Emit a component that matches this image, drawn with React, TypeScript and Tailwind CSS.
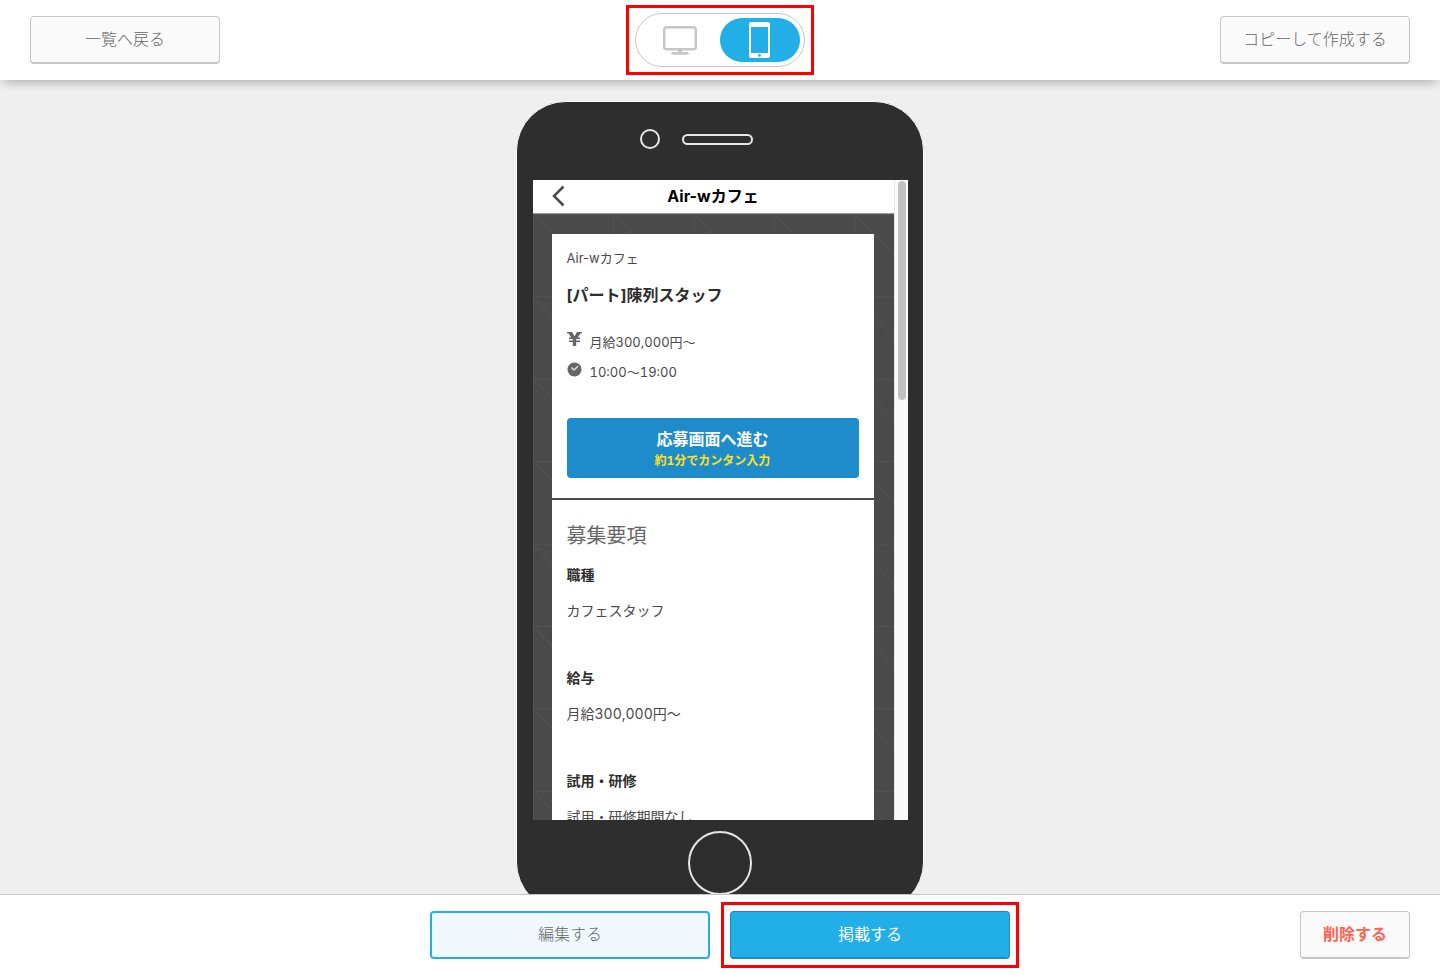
import { useState } from "react";
import clsx from "clsx";

type Device = "pc" | "phone";

const requirements = [
  { label: "職種", value: "カフェスタッフ" },
  { label: "給与", value: "月給300,000円〜" },
  { label: "試用・研修", value: "試用・研修期間なし" },
];

export default function App() {
  const [device, setDevice] = useState<Device>("phone");

  return (
    <div className="flex h-screen flex-col overflow-hidden bg-[#efefef] font-['Noto_Sans_CJK_JP',sans-serif] text-base text-[#666]">
      <header className="relative z-10 grid h-20 shrink-0 grid-cols-[1fr_auto_1fr] items-center bg-white px-[30px] shadow-[0_6px_10px_-4px_rgba(0,0,0,0.3)]">
        <PlainButton className="w-[190px] font-light">一覧へ戻る</PlainButton>
        <DeviceToggle device={device} onChange={setDevice} />
        <PlainButton className="w-[190px] justify-self-end font-light">
          コピーして作成する
        </PlainButton>
      </header>

      <main className="flex min-h-0 flex-1 items-start justify-center overflow-hidden pt-[21px]">
        <PhoneFrame />
      </main>

      <footer className="z-10 grid shrink-0 grid-cols-[1fr_auto_1fr] items-center border-t border-[#c6c6c6] bg-white px-[30px] py-4">
        <div />
        <div className="flex gap-5">
          <button className="h-12 w-[280px] rounded border-2 border-[#22aee6] bg-[#f1f9ff] pb-1 font-light">
            編集する
          </button>
          <div className="outline-[3px] outline-offset-[6px] outline-[#f00] outline-solid">
            <button className="h-12 w-[280px] rounded border border-b-2 border-[#1c8bb8] bg-[#22aee6] pb-1 text-white">
              掲載する
            </button>
          </div>
        </div>
        <PlainButton className="w-[110px] justify-self-end font-bold text-[#ff6252]">
          削除する
        </PlainButton>
      </footer>
    </div>
  );
}

// ---- Sub-components ----

function PlainButton({
  className,
  children,
}: {
  className?: string;
  children: React.ReactNode;
}) {
  return (
    <button
      className={clsx(
        "h-12 rounded border border-b-2 border-[#c6c6c6] bg-[#fafafa] pb-1",
        className
      )}
    >
      {children}
    </button>
  );
}

function DeviceToggle({
  device,
  onChange,
}: {
  device: Device;
  onChange: (device: Device) => void;
}) {
  const buttonClass = (active: boolean) =>
    clsx(
      "flex h-11 w-20 items-center justify-center rounded-full",
      active ? "bg-[#22aee6] text-white" : "text-[#c6c6c6]"
    );

  return (
    <div className="border-[3px] border-[#f00] px-[6px] py-[5px]">
      <div className="flex rounded-full border border-[#c6c6c6] bg-white p-1">
        <button
          aria-label="PC"
          aria-pressed={device === "pc"}
          onClick={() => onChange("pc")}
          className={buttonClass(device === "pc")}
        >
          <svg width="34" height="30" viewBox="0 0 34 30" fill="none">
            <rect x="1.25" y="2.25" width="31.5" height="22" rx="2.5" stroke="currentColor" strokeWidth="2.5" />
            <path d="M15 25h4v2h5.500a1.400 1.400 0 0 1 0 2.800h-15a1.400 1.400 0 0 1 0-2.800H15z" fill="currentColor" />
          </svg>
        </button>
        <button
          aria-label="スマートフォン"
          aria-pressed={device === "phone"}
          onClick={() => onChange("phone")}
          className={buttonClass(device === "phone")}
        >
          <svg width="22" height="36" viewBox="0 0 22 36">
            <path
              fillRule="evenodd"
              fill="currentColor"
              d="M2 0h17a2 2 0 0 1 2 2v32a2 2 0 0 1-2 2H2a2 2 0 0 1-2-2V2a2 2 0 0 1 2-2zM2 5v26h17V5zM10.500 32a1.400 1.400 0 1 0 0 2.800a1.400 1.400 0 0 0 0-2.800z"
            />
          </svg>
        </button>
      </div>
    </div>
  );
}

function PhoneFrame() {
  return (
    <div className="flex h-[811px] w-[408px] shrink-0 flex-col items-center rounded-[50px] border border-[#fafafa] bg-[#2e2e2e]">
      {/* Camera and speaker */}
      <div className="mb-1 flex h-[74px] w-full shrink-0 items-center gap-[22px] pl-[123px]">
        <div className="h-5 w-5 rounded-full border-2 border-[#e6e6e6]" />
        <div className="h-[11px] w-[71px] rounded-full border-2 border-[#e6e6e6]" />
      </div>

      <div className="flex h-[640px] w-[375px] shrink-0 overflow-hidden">
        <JobPreview />
        <div className="w-[14px] shrink-0 border-l border-[#e8e8e8] bg-[#fafafa] px-[3px] py-px">
          <div className="h-[219px] w-2 rounded-full bg-[#c1c1c1]" />
        </div>
      </div>

      {/* Home button */}
      <div className="mt-[11px] h-16 w-16 shrink-0 rounded-full border-2 border-[#e6e6e6]" />
    </div>
  );
}

function JobPreview() {
  return (
    <div className="flex min-w-0 flex-1 flex-col font-['Inter','Noto_Sans_CJK_JP',sans-serif] text-[#4a4a4a]">
      <div className="grid h-[34px] shrink-0 grid-cols-[36px_1fr_36px] items-center border-b border-[#999] bg-white pb-0.5">
        <button aria-label="戻る" className="flex justify-end pr-1">
          <svg width="13" height="22" viewBox="0 0 13 22" fill="none">
            <path d="M11.500 1.500 2 11l9.500 9.500" stroke="#4a4a4a" strokeWidth="2.500" />
          </svg>
        </button>
        <h1 className="text-center text-base leading-6 font-bold text-black">
          Air-wカフェ
        </h1>
      </div>

      <div className="relative min-h-0 flex-1 overflow-hidden bg-[#4a4a4a]">
        <TriangleBackdrop />
        <div className="relative mt-5 mr-5 ml-[19px]">
          <section className="bg-white px-[15px] pt-[14px] pb-5">
            <p className="text-[13px] leading-5">Air-wカフェ</p>
            <h2 className="mt-[15px] text-base leading-6 font-bold text-[#2e2e2e]">
              [パート]陳列スタッフ
            </h2>
            <ul className="mt-[25px] space-y-[10px] text-[13px] leading-5 tabular-nums">
              <li className="flex gap-2">
                <YenIcon />
                月給300,000円〜
              </li>
              <li className="flex gap-2">
                <ClockIcon />
                10:00〜19:00
              </li>
            </ul>
            <button className="mt-9 flex h-[60px] w-full flex-col items-center justify-center rounded bg-[#1e8ccb] pt-0.5 font-bold tabular-nums">
              <span className="text-base leading-6 text-white">
                応募画面へ進む
              </span>
              <span className="text-xs leading-5 text-[#ffe11b]">
                約1分でカンタン入力
              </span>
            </button>
          </section>

          <section className="mt-0.5 bg-white px-[15px] pt-[22px]">
            <h2 className="text-xl leading-7 text-[#666]">募集要項</h2>
            <dl className="mt-[15px] text-sm leading-5 tabular-nums">
              {requirements.map((item) => (
                <div key={item.label} className="pb-[47px]">
                  <dt className="font-bold text-[#2e2e2e]">{item.label}</dt>
                  <dd className="mt-4">{item.value}</dd>
                </div>
              ))}
            </dl>
          </section>
        </div>
      </div>
    </div>
  );
}

function TriangleBackdrop() {
  return (
    <svg className="absolute inset-0 h-full w-full" aria-hidden="true">
      <defs>
        <pattern id="triangles" width="80.300" height="82.400" patternUnits="userSpaceOnUse">
          <path d="M0 .5h80.300M.5 0v82.400M0 0l81 83" stroke="#525252" fill="none" />
        </pattern>
      </defs>
      <rect width="100%" height="100%" fill="url(#triangles)" />
    </svg>
  );
}

function YenIcon() {
  return (
    <svg width="15" height="14" viewBox="0 0 15 14" className="shrink-0" fill="#666">
      <path d="M0 0h5l2.500 4.200L10 0h5v1.200l-1.600.3L10.800 5.500H13v1.600H9.200v1.300H13V10H9.200v4H5.800v-4H2V8.400h3.800V7.100H2V5.500h2.200L1.600 1.500 0 1.200z" />
    </svg>
  );
}

function ClockIcon() {
  return (
    <svg width="15" height="15" viewBox="0 0 15 15" className="shrink-0">
      <circle cx="7.500" cy="7.500" r="7" fill="#666" />
      <path d="M4.500 5.500 7 8l4-3.800" stroke="#ddd" strokeWidth="1.500" fill="none" />
    </svg>
  );
}
